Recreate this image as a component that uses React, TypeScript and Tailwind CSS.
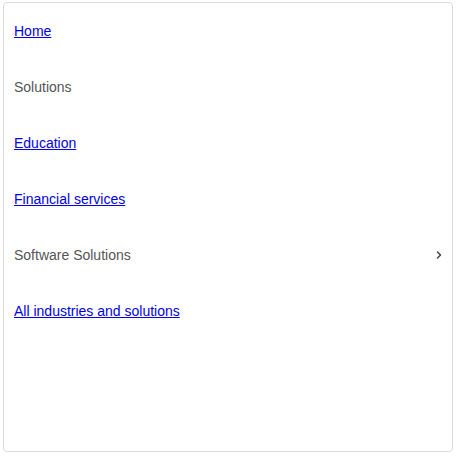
import { ChevronRight } from "lucide-react";

const items = [
  { label: "Home", link: true },
  { label: "Solutions", link: false },
  { label: "Education", link: true },
  { label: "Financial services", link: true },
  { label: "Software Solutions", link: false, arrow: true },
  { label: "All industries and solutions", link: true },
];

export default function App() {
  return (
    <div className="pl-[3px] pt-[2px] bg-white min-h-screen" style={{ fontFamily: "'Liberation Sans', Arial, sans-serif" }}>
      <nav className="w-[450px] h-[450px] border border-[#dcdcdc] rounded-[4px] bg-white">
        <ul className="flex flex-col">
          {items.map((item) => (
            <li key={item.label} className="h-[56px] flex items-center justify-between pl-[10px] pr-[7px] text-[14px]">
              {item.link ? (
                <a href="#" className="text-[#0000ee] underline">
                  {item.label}
                </a>
              ) : (
                <span className="text-[#555555]">{item.label}</span>
              )}
              {item.arrow && <ChevronRight className="w-[12px] h-[12px] text-[#444444]" strokeWidth={3} />}
            </li>
          ))}
        </ul>
      </nav>
    </div>
  );
}
